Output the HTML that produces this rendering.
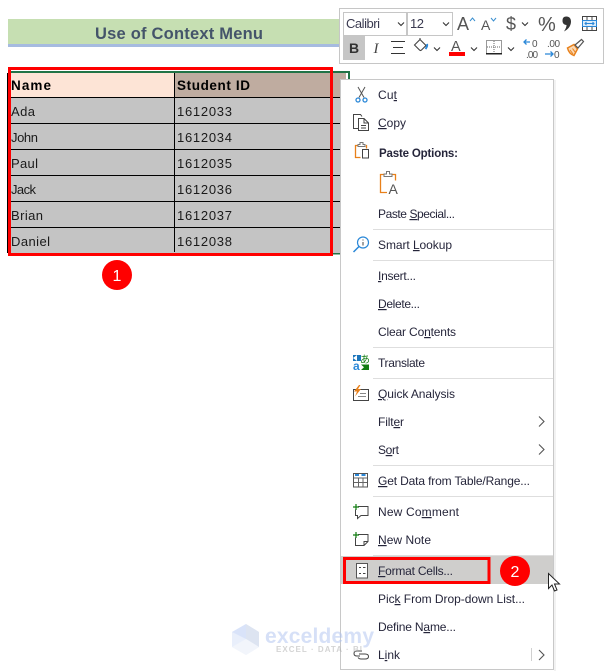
<!DOCTYPE html>
<html><head><meta charset="utf-8"><style>
html,body{margin:0;padding:0;background:#fff;width:607px;height:671px;overflow:hidden}
svg{display:block}
text{font-family:"Liberation Sans",sans-serif}
.m{font-size:12px;fill:#25253a}
.t{font-size:13px;fill:#1a1a1a}
.u{text-decoration:underline}
</style></head><body>
<svg width="607" height="671" viewBox="0 0 607 671" xmlns="http://www.w3.org/2000/svg">
<rect width="607" height="671" fill="#fff"/>
<!-- title -->
<rect x="8" y="19" width="332" height="25" fill="#c6dfb2"/>
<rect x="8" y="44" width="332" height="3" fill="#a6bbe0"/>
<text x="95" y="39" font-size="16.500" font-weight="700" fill="#44546a" textLength="168">Use of Context Menu</text>
<!-- table -->
<rect x="8" y="73" width="166" height="24" fill="#fde4d6"/>
<rect x="174" y="73" width="172" height="24" fill="#bfaca0"/>
<rect x="8" y="97" width="332" height="156" fill="#c4c4c4"/>
<rect x="8" y="71" width="341" height="2" fill="#217346"/>
<rect x="348" y="71" width="2" height="9" fill="#217346"/>
<rect x="8" y="253" width="332" height="1.500" fill="#217346"/>
<g fill="#000">
<rect x="8" y="97" width="332" height="1"/><rect x="8" y="123" width="332" height="1"/><rect x="8" y="149" width="332" height="1"/><rect x="8" y="175" width="332" height="1"/><rect x="8" y="201" width="332" height="1"/><rect x="8" y="227" width="332" height="1"/>
<rect x="174" y="73" width="1" height="179"/>
<rect x="7" y="73" width="1" height="180"/>
</g>
<text x="11" y="90" font-size="13.500" font-weight="700" fill="#000" textLength="40">Name</text>
<text x="177" y="90" font-size="13.500" font-weight="700" fill="#000" textLength="73">Student ID</text>
<text class="t" x="11" y="116" textLength="24">Ada</text>
<text class="t" x="11" y="142" textLength="27">John</text>
<text class="t" x="11" y="168" textLength="27">Paul</text>
<text class="t" x="11" y="194" textLength="25">Jack</text>
<text class="t" x="11" y="220" textLength="32">Brian</text>
<text class="t" x="11" y="246" textLength="39">Daniel</text>
<text class="t" x="177" y="116" textLength="55">1612033</text>
<text class="t" x="177" y="142" textLength="55">1612034</text>
<text class="t" x="177" y="168" textLength="55">1612035</text>
<text class="t" x="177" y="194" textLength="55">1612036</text>
<text class="t" x="177" y="220" textLength="55">1612037</text>
<text class="t" x="177" y="246" textLength="55">1612038</text>
<rect x="9.500" y="68.500" width="322" height="186" fill="none" stroke="#f00" stroke-width="3"/>
<circle cx="117" cy="275" r="15" fill="#f00"/>
<text x="117" y="281" font-size="16" fill="#fff" text-anchor="middle">1</text>

<!-- mini toolbar -->
<rect x="339.500" y="8.500" width="264" height="55" fill="#fff" stroke="#c6c6c6"/>
<rect x="343.500" y="12.500" width="63" height="23" fill="#fff" stroke="#c6c6c6"/>
<rect x="407.500" y="12.500" width="45" height="23" fill="#fff" stroke="#c6c6c6"/>
<text x="346" y="28" font-size="13" fill="#3a3a50" textLength="34">Calibri</text>
<text x="410" y="28" font-size="13" fill="#3a3a50" textLength="14">12</text>
<g fill="none" stroke="#333" stroke-width="1.100">
<path d="M398 22.500l3 3 3-3M443 22.500l3 3 3-3M522 22.500l3 3 3-3M434 47.500l3 3 3-3M471 47.500l3 3 3-3M508 47.500l3 3 3-3"/>
</g>
<text x="457" y="30" font-size="18" fill="#555" textLength="13">A</text>
<path d="M470 21l2.500-3 2.500 3" fill="none" stroke="#3a8fd0"/>
<text x="481" y="30" font-size="14" fill="#555" textLength="10">A</text>
<path d="M491 18l2.500 3 2.500-3" fill="none" stroke="#3a8fd0"/>
<text x="506" y="30" font-size="18" fill="#555">$</text>
<text x="538" y="31" font-size="20" fill="#555" textLength="15">%</text>
<path d="M564 17c3.500-1.500 7 0 7 4.500 0 4.500-3 8-7 10 2-3 2.500-5 2.500-6.500-2 0-4-1.500-4-4s.5-3 1.500-4z" fill="#333"/>
<rect x="582.500" y="16.500" width="14" height="14" fill="#fff" stroke="#444"/>
<path d="M587 17v3M592 17v3M587 27v3M592 27v3" stroke="#444"/>
<rect x="582.500" y="20.500" width="14" height="6" fill="#dcecfa" stroke="#2b88d8"/>
<path d="M585 23.500h9M586.500 22l-1.500 1.500 1.500 1.500M592.500 22l1.500 1.500-1.500 1.500" fill="none" stroke="#2b88d8"/>
<rect x="343" y="36" width="22" height="24" fill="#c6c6c6"/>
<text x="354" y="53" font-size="14" font-weight="700" fill="#333" text-anchor="middle">B</text>
<text x="376" y="53" font-size="15" font-style="italic" fill="#444" style="font-family:'Liberation Serif',serif" text-anchor="middle">I</text>
<path d="M391 41.500h14M393 47.500h10M391 53.500h14" stroke="#333" fill="none"/>
<path d="M414.500 45l5.500-5.500 6 6-4.500 4.500q-1 1-2 0zM420 39.500v-1.500" fill="#fff" stroke="#444" stroke-width="1.100"/>
<path d="M425.500 49c1.500-2 2-3.500 1.500-5" stroke="#2b88d8" stroke-width="2" fill="none"/>
<text x="451" y="51" font-size="14.500" fill="#555" textLength="11">A</text>
<rect x="449" y="52" width="16" height="4" fill="#f00"/>
<rect x="486.500" y="40.500" width="15" height="13" fill="none" stroke="#333" stroke-dasharray="1 1"/>
<path d="M494 41v12M487 47h14" stroke="#666" stroke-dasharray="1 1" fill="none"/>
<rect x="486" y="53" width="16" height="1.500" fill="#222"/>
<path d="M530 46h-6M526.500 43.500l-2.500 2.500 2.500 2.500" fill="none" stroke="#2b88d8" stroke-width="1.300" transform="translate(0,-4)"/>
<text x="532" y="47" font-size="10" fill="#555" textLength="6">0</text>
<text x="526" y="58" font-size="10" fill="#555" textLength="12">.00</text>
<text x="547" y="47" font-size="10" fill="#555" textLength="13">.00</text>
<path d="M545 54h8M550.500 51.500l2.500 2.500-2.500 2.500" fill="none" stroke="#2b88d8" stroke-width="1.300"/>
<text x="554" y="58" font-size="10" fill="#555" textLength="6">0</text>
<path d="M567.500 48l6.500-3.500 3.500 4.500-3.500 6.500q-5-1.500-6.500-7.500z" fill="#fbd9b4" stroke="#e8801a" stroke-width="1.500"/>
<path d="M570 50l3 4M572.500 48.500l3 4" stroke="#e8801a"/>
<path d="M575 45l6.500-5.500 2 2-5.500 6.500z" fill="#fff" stroke="#555" stroke-width="1.200"/>

<!-- context menu -->
<rect x="340.500" y="79.500" width="213" height="590" fill="#fff" stroke="#c8c8c8"/>
<rect x="554" y="80" width="2" height="591" fill="#f2f2f2"/>
<g fill="#dedede">
<rect x="373" y="229" width="180" height="1"/><rect x="373" y="260" width="180" height="1"/><rect x="373" y="347" width="180" height="1"/><rect x="373" y="378" width="180" height="1"/><rect x="373" y="465" width="180" height="1"/><rect x="373" y="496" width="180" height="1"/><rect x="373" y="555" width="180" height="1"/>
</g>
<rect x="341" y="556" width="212" height="28" fill="#cfcecc"/>

<text class="m" x="378" y="99" textLength="19">Cu<tspan class="u">t</tspan></text>
<text class="m" x="378" y="127" textLength="28"><tspan class="u">C</tspan>opy</text>
<text class="m" x="379" y="157" font-weight="700" textLength="79" style="font-size:11.500px">Paste Options:</text>
<text class="m" x="378" y="218" textLength="77">Paste <tspan class="u">S</tspan>pecial...</text>
<text class="m" x="378" y="249" textLength="74">Smart <tspan class="u">L</tspan>ookup</text>
<text class="m" x="378" y="280" textLength="38"><tspan class="u">I</tspan>nsert...</text>
<text class="m" x="378" y="308" textLength="42"><tspan class="u">D</tspan>elete...</text>
<text class="m" x="378" y="336" textLength="78">Clear Co<tspan class="u">n</tspan>tents</text>
<text class="m" x="378" y="367" textLength="47">Translate</text>
<text class="m" x="378" y="398" textLength="77"><tspan class="u">Q</tspan>uick Analysis</text>
<text class="m" x="378" y="426" textLength="26">Filt<tspan class="u">e</tspan>r</text>
<text class="m" x="378" y="454" textLength="21">S<tspan class="u">o</tspan>rt</text>
<text class="m" x="378" y="485" textLength="152"><tspan class="u">G</tspan>et Data from Table/Range...</text>
<text class="m" x="378" y="516" textLength="81">New Co<tspan class="u">m</tspan>ment</text>
<text class="m" x="378" y="544" textLength="53"><tspan class="u">N</tspan>ew Note</text>
<text class="m" x="378" y="575" textLength="75"><tspan class="u">F</tspan>ormat Cells...</text>
<text class="m" x="378" y="603" textLength="147">Pic<tspan class="u">k</tspan> From Drop-down List...</text>
<text class="m" x="378" y="631" textLength="78">Define N<tspan class="u">a</tspan>me...</text>
<text class="m" x="378" y="659" textLength="22">L<tspan class="u">i</tspan>nk</text>

<path d="M539 416.500l5 5-5 5M539 444.500l5 5-5 5M539 650l5 5-5 5" fill="none" stroke="#555" stroke-width="1.100"/>
<rect x="531" y="648" width="1" height="13" fill="#d0d0d0"/>

<!-- icons -->
<path d="M358 87l6 10.500M365 87l-6 10.500" stroke="#555" fill="none"/>
<circle cx="358" cy="100" r="2" fill="none" stroke="#2b88d8" stroke-width="1.300"/><circle cx="365" cy="100" r="2" fill="none" stroke="#2b88d8" stroke-width="1.300"/>
<path d="M358 128.500h-4.500v-14h7l1.500 2" fill="none" stroke="#444"/>
<path d="M358.500 118.500h5.500l4.500 4.500v7.500h-10zM364 118.500v4.500h4.500M361 125.500h5M361 128h5" fill="#fff" stroke="#444"/>
<path d="M358 145.500h-2.500v12h5M366 145.500h.5v3" fill="none" stroke="#e8801a" stroke-width="1.300"/>
<path d="M358 146.500v-2h2v-2h3v2h2v2z" fill="#fff" stroke="#777"/>
<rect x="362.500" y="149.500" width="6" height="8.500" fill="#fff" stroke="#444"/>
<path d="M391 174.500h4.500v6M387 192.500h-6.500v-18h4" fill="none" stroke="#e8801a" stroke-width="1.300"/>
<path d="M384 176.500v-2.500h2.500v-2.500h3v2.500h2.500v2.500z" fill="#fff" stroke="#777"/>
<text x="388.500" y="194" font-size="14" fill="#555" textLength="11">A</text>
<circle cx="363" cy="242.500" r="5.500" fill="none" stroke="#2b88d8" stroke-width="1.200"/>
<path d="M359 246.500l-5.500 5.500" stroke="#2b88d8" stroke-width="1.500"/>
<path d="M363 242v3.500M363 239.500v1" stroke="#444"/>
<rect x="353" y="355" width="8" height="6" fill="#1b75bb"/>
<path d="M353 358l4-3v6z" fill="#fff"/>
<text x="353" y="370" font-size="12" font-weight="700" fill="#2b88d8">a</text>
<text x="360" y="363" font-size="10" fill="#107c10" style="font-family:'Noto Sans CJK JP',sans-serif">あ</text>
<path d="M361 364.500h8v5.500h-8l3-2.700z" fill="#107c10"/>
<rect x="353.500" y="389.500" width="15" height="11" fill="none" stroke="#444"/>
<path d="M358 396.500h8M360 393.500h6" stroke="#888"/>
<path d="M359 385l-5 6.500h3l-2 5 6-7.500h-3l2.500-4z" fill="#e8801a"/>
<rect x="353.500" y="473.500" width="14" height="13.500" fill="#fff" stroke="#555"/>
<path d="M354 478h13M354 482.500h13M358.500 478v9M363 478v9" stroke="#666" fill="none"/>
<rect x="355" y="474" width="4" height="2" fill="#2b88d8"/><rect x="361.500" y="474" width="4" height="2" fill="#2b88d8"/>
<path d="M358 506.500h10v9h-7l-3.500 3v-3h-2v-6" fill="none" stroke="#444"/>
<path d="M353 507h6M356 504v6" stroke="#107c10" stroke-width="1.200"/>
<path d="M358 534.500h10v7l-4 4h-8.500v-8M368 541.500h-4v4" fill="none" stroke="#444"/>
<path d="M353 535h6M356 532v6" stroke="#107c10" stroke-width="1.200"/>
<rect x="356.500" y="563.500" width="11" height="14.500" fill="#fff" stroke="#555"/>
<path d="M359 567.500h2M363 567.500h2.500M359 573.500h2M363 573.500h2.500" stroke="#444" stroke-width="1"/>
<path d="M362 651h-5q-3 0-3 2.500t3 2.500h3M359 654h6q3.500 0 3.500 2.500t-3.500 2.500h-4q-2 0-3-1.500" fill="none" stroke="#444"/>

<!-- format cells highlight -->
<rect x="344.500" y="558.500" width="144.500" height="24" fill="none" stroke="#f00" stroke-width="3"/>
<circle cx="515" cy="571" r="15" fill="#f00"/>
<text x="515" y="577" font-size="16" fill="#fff" text-anchor="middle">2</text>
<path d="M548.500 573.500v15l3.500-3.500 2.500 6 2.500-1-2.500-6h5z" fill="#fff" stroke="#222"/>

<!-- watermark -->
<g opacity=".5">
<path d="M246 624l13 8v15l-13 8-14-8v-15z" fill="#d5e0f8"/>
<path d="M246 624l13 8v15l-13-8z" fill="#bccbe4"/>
<path d="M232 632l14 7v-15z" fill="#b4c8f5"/>
<path d="M232 647l14-8 13 8-13 8z" fill="#e6edf8"/>
<text x="265" y="643" font-size="21" font-weight="700" fill="#aec2f0" textLength="109">exceldemy</text>
<text x="276" y="652" font-size="8" font-weight="700" fill="#aaa" textLength="86">EXCEL · DATA · BI</text>
</g>
</svg>
</body></html>
